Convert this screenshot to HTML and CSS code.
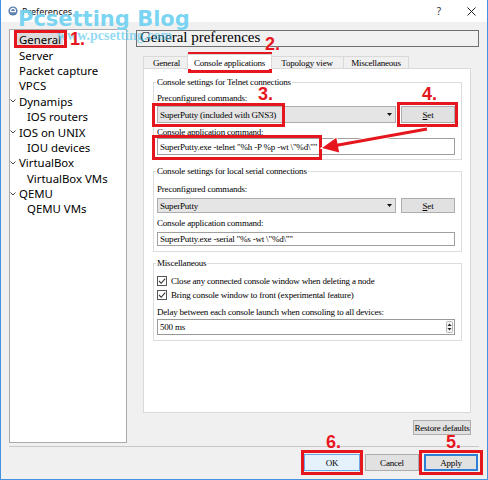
FILE: index.html
```html
<!DOCTYPE html>
<html>
<head>
<meta charset="utf-8">
<title>Preferences</title>
<link rel="stylesheet" href="styles.css">
</head>
<body>
<div class="window">
  <header class="titlebar">
    <svg class="app-icon" viewBox="0 0 10 10">
      <circle cx="5" cy="5" r="4.6" fill="#5d80b0"/>
      <path d="M2.6 5.6 A2.5 2.5 0 1 1 7.4 5.6 H2.6" fill="none" stroke="#fff" stroke-width="1.1"/>
    </svg>
    <span class="title">Preferences</span>
    <span class="help">?</span>
    <svg class="close" viewBox="0 0 9 9"><path d="M0.5 0.5 L8.5 8.5 M8.5 0.5 L0.5 8.5" stroke="#222" stroke-width="1"/></svg>
  </header>

  <div class="body">
    <div class="main">
      <ul class="tree">
        <li class="item"><span class="sel">General</span></li>
        <li class="item">Server</li>
        <li class="item">Packet capture</li>
        <li class="item">VPCS</li>
        <li class="item"><svg class="chev" viewBox="0 0 6 4"><path d="M0.5 0.5 L3 3 L5.5 0.5" fill="none" stroke="#444" stroke-width="1"/></svg>Dynamips</li>
        <li class="item child">IOS routers</li>
        <li class="item"><svg class="chev" viewBox="0 0 6 4"><path d="M0.5 0.5 L3 3 L5.5 0.5" fill="none" stroke="#444" stroke-width="1"/></svg>IOS on UNIX</li>
        <li class="item child">IOU devices</li>
        <li class="item"><svg class="chev" viewBox="0 0 6 4"><path d="M0.5 0.5 L3 3 L5.5 0.5" fill="none" stroke="#444" stroke-width="1"/></svg>VirtualBox</li>
        <li class="item child">VirtualBox VMs</li>
        <li class="item"><svg class="chev" viewBox="0 0 6 4"><path d="M0.5 0.5 L3 3 L5.5 0.5" fill="none" stroke="#444" stroke-width="1"/></svg>QEMU</li>
        <li class="item child">QEMU VMs</li>
      </ul>

      <section class="page">
        <div class="page-title">General preferences</div>
        <div class="tabwidget">
          <div class="tabbar">
            <span class="tab tab-general">General</span>
            <span class="tab tab-console active">Console applications</span>
            <span class="tab tab-topology">Topology view</span>
            <span class="tab tab-misc">Miscellaneous</span>
          </div>
          <div class="pane">
            <fieldset class="group group-telnet">
              <legend>Console settings for Telnet connections</legend>
              <div class="label">Preconfigured commands:</div>
              <div class="row">
                <div class="combo ctl"><span class="combo-text">SuperPutty (included with GNS3)</span><svg class="drop" viewBox="0 0 5 3"><polygon points="0,0 5,0 2.5,3" fill="#111"/></svg></div>
                <button class="btn set ctl"><u>S</u>et</button>
              </div>
              <div class="label">Console application command:</div>
              <div class="field ctl">SuperPutty.exe -telnet "%h -P %p -wt \"%d\""</div>
            </fieldset>

            <fieldset class="group group-serial">
              <legend>Console settings for local serial connections</legend>
              <div class="label">Preconfigured commands:</div>
              <div class="row">
                <div class="combo ctl"><span class="combo-text">SuperPutty</span><svg class="drop" viewBox="0 0 5 3"><polygon points="0,0 5,0 2.5,3" fill="#111"/></svg></div>
                <button class="btn set ctl"><u>S</u>et</button>
              </div>
              <div class="label">Console application command:</div>
              <div class="field ctl">SuperPutty.exe -serial "%s -wt \"%d\""</div>
            </fieldset>

            <fieldset class="group group-misc">
              <legend>Miscellaneous</legend>
              <div class="check check-first"><svg class="box" viewBox="0 0 10 10"><rect x="0.5" y="0.5" width="9" height="9" fill="#fff" stroke="#555"/><path d="M2 5 L4.2 7.3 L8.2 2.6" fill="none" stroke="#333" stroke-width="1.1"/></svg><span>Close any connected console window when deleting a node</span></div>
              <div class="check"><svg class="box" viewBox="0 0 10 10"><rect x="0.5" y="0.5" width="9" height="9" fill="#fff" stroke="#555"/><path d="M2 5 L4.2 7.3 L8.2 2.6" fill="none" stroke="#333" stroke-width="1.1"/></svg><span>Bring console window to front (experimental feature)</span></div>
              <div class="label delay">Delay between each console launch when consoling to all devices:</div>
              <div class="spin"><span class="spin-text">500 ms</span><svg class="spin-arrows" viewBox="0 0 7 12"><rect x="0.5" y="0.5" width="6" height="11" rx="1" fill="#f4f4f4" stroke="#b5b5b5"/><polygon points="1.5,5 5.5,5 3.5,2.5" fill="#222"/><polygon points="1.5,7 5.5,7 3.5,9.5" fill="#222"/></svg></div>
            </fieldset>
          </div>
        </div>
        <div class="restore-row"><button class="btn restore">Restore defaults</button></div>
      </section>
    </div>
    <div class="separator"></div>
    <div class="buttons">
      <button class="btn dlg ok">OK</button>
      <button class="btn dlg cancel">Cancel</button>
      <button class="btn dlg apply">Apply</button>
    </div>
  </div>

  <div class="watermark">Pcsetting Blog</div>
  <div class="watermark-url">www.pcsetting.com</div>

  <div class="mark mark-general"></div>
  <div class="mark mark-tab"></div>
  <div class="mark mark-combo"></div>
  <div class="mark mark-set"></div>
  <div class="mark mark-input"></div>
  <div class="mark mark-ok"></div>
  <div class="mark mark-apply"></div>

  <span class="num num-1">1.</span>
  <span class="num num-2">2.</span>
  <span class="num num-3">3.</span>
  <span class="num num-4">4.</span>
  <span class="num num-5">5.</span>
  <span class="num num-6">6.</span>

  <svg class="arrow" viewBox="0 0 488 480">
    <line x1="427" y1="129" x2="337" y2="145.2" stroke="#fff" stroke-width="5"/>
    <polygon points="322,148 336.3,137.8 339.2,152.4" fill="#fff" stroke="#fff" stroke-width="2"/>
    <line x1="427" y1="129" x2="337" y2="145.2" stroke="#e5161e" stroke-width="3"/>
    <polygon points="322,148 336.3,137.8 339.2,152.4" fill="#e5161e"/>
  </svg>
</div>
</body>
</html>
```

FILE: styles.css
```css
* {
  box-sizing: border-box;
}

html,
body {
  margin: 0;
  padding: 0;
}

body {
  width: 488px;
  height: 480px;
  overflow: hidden;
  background: #f0f0f0;
  font-family: "Liberation Serif", serif;
}

.window {
  position: relative;
  width: 488px;
  height: 480px;
  background: #f0f0f0;
}

.window::after {
  content: "";
  position: absolute;
  inset: 0;
  border: 1px solid #4393df;
  border-top: none;
  pointer-events: none;
}

/* Title bar */
.titlebar {
  height: 22px;
  background: #fff;
  display: flex;
  align-items: center;
  padding-left: 8px;
  font-family: "Noto Sans", sans-serif;
}

.app-icon {
  width: 10px;
  height: 10px;
  margin-right: 4px;
}

.title {
  flex: 1;
  font-size: 9px;
  color: #111;
}

.help {
  font-size: 10px;
  color: #333;
  margin-right: 26px;
}

.close {
  width: 9px;
  height: 9px;
  margin-right: 12px;
}

/* Body */
.body {
  padding: 7px 9px 0 9px;
}

.main {
  display: flex;
  gap: 9px;
  height: 414px;
}

/* Tree */
.tree {
  width: 118px;
  flex: none;
  margin: 0;
  padding: 2px 0 0 0;
  list-style: none;
  background: #fff;
  border: 1px solid #a9a9a9;
  font-family: "Noto Sans", sans-serif;
  font-size: 11.4px;
  color: #000;
}

.item {
  height: 15.4px;
  display: flex;
  align-items: center;
  padding-left: 9px;
  white-space: nowrap;
}

.item.child {
  padding-left: 17px;
}

.chev {
  width: 6px;
  height: 4px;
  margin-left: -9px;
  margin-right: 3px;
}

.sel {
  background: #dcdcdc;
  padding: 0 2px;
  margin-left: -2px;
}

/* Right page */
.page {
  flex: 1;
  display: flex;
  flex-direction: column;
  padding-top: 1px;
  min-width: 0;
}

.page-title {
  height: 17px;
  border: 1px solid #6e6e6e;
  background: #f1f1f1;
  padding-left: 3px;
  font-family: "Liberation Serif", serif;
  font-size: 15px;
  line-height: 13px;
  color: #000;
}

.tabwidget {
  margin: 7px 8px 0 7px;
  display: flex;
  flex-direction: column;
}

.tabbar {
  height: 14px;
  display: flex;
  align-items: flex-end;
}

.tab {
  height: 12px;
  padding-top: 1px;
  border: 1px solid #d9d9d9;
  border-bottom: none;
  border-right-width: 0;
  background: #f0f0f0;
  font-size: 9px;
  line-height: 11px;
  letter-spacing: -0.2px;
  text-align: center;
  white-space: nowrap;
  color: #000;
}

.tab-general {
  width: 46px;
}

.tab-console {
  width: 85px;
}

.tab-topology {
  width: 73px;
}

.tab-misc {
  width: 66px;
  border-right-width: 1px;
}

.tab.active {
  height: 15px;
  padding-top: 3px;
  margin: 0 -2px -1px;
  border-right-width: 1px;
  background: #fff;
  position: relative;
  z-index: 1;
}

.pane {
  height: 345px;
  background: #fff;
  border: 1px solid #d9d9d9;
  padding: 8px 8px 0 9px;
  font-size: 9px;
  line-height: 12px;
  letter-spacing: -0.2px;
  color: #000;
}

/* Group boxes */
.group {
  margin: 0;
  min-width: 0;
  border: 1px solid #dcdcdc;
  padding: 4px 6px 4px 3px;
}

.group legend {
  padding: 0 1px;
  margin-left: -1px;
  font-size: 9px;
  line-height: 11px;
}

.label {
  height: 12px;
  white-space: nowrap;
}

.row {
  display: flex;
  gap: 5px;
}

.combo {
  flex: 1;
  display: flex;
  align-items: center;
  background: #e5e5e5;
  border: 1px solid #adadad;
  padding-left: 2px;
}

.combo-text {
  flex: 1;
  white-space: nowrap;
}

.drop {
  width: 5px;
  height: 3px;
  margin-right: 3px;
}

.field {
  display: flex;
  align-items: center;
  background: #fff;
  border: 1px solid #a0a0a0;
  padding-left: 2px;
  white-space: nowrap;
}

.btn {
  margin: 0;
  padding: 0;
  background: #e1e1e1;
  border: 1px solid #adadad;
  border-radius: 0;
  font-family: "Liberation Serif", serif;
  font-size: 9px;
  letter-spacing: -0.2px;
  color: #000;
  text-align: center;
  white-space: nowrap;
}

.set {
  width: 54px;
}

.group-telnet {
  padding-top: 4px;
}

.group-telnet .row {
  margin: 2px 0 3px;
}

.group-telnet .ctl {
  height: 17px;
}

.group-serial {
  margin-top: 6px;
  padding-top: 6px;
  padding-bottom: 5px;
}

.group-serial .row {
  margin: 3px 0 4px;
}

.group-serial .ctl {
  height: 15px;
}

.group-serial .field {
  height: 14px;
  margin-top: 3px;
}

.group-misc {
  margin-top: 6px;
  padding-top: 0;
  padding-bottom: 5px;
}

.check {
  height: 12px;
  display: flex;
  align-items: center;
  gap: 4px;
  margin-top: 2px;
  white-space: nowrap;
}

.check-first {
  margin-top: 6px;
}

.box {
  width: 10px;
  height: 10px;
  flex: none;
}

.delay {
  margin-top: 5px;
}

.spin {
  height: 16px;
  margin-top: 1px;
  display: flex;
  align-items: center;
  border: 1px solid #999;
  background: #fff;
  padding-left: 2px;
}

.spin-text {
  flex: 1;
}

.spin-arrows {
  width: 7px;
  height: 12px;
  margin-right: 1px;
}

.restore-row {
  display: flex;
  justify-content: flex-end;
  margin-top: 7px;
  padding-right: 8px;
}

.restore {
  width: 58px;
  height: 15px;
}

.separator {
  margin-top: 3px;
  height: 1px;
  background: #c9c9c9;
}

.buttons {
  display: flex;
  justify-content: flex-end;
  gap: 5px;
  margin-top: 7px;
  padding-right: 1px;
}

.dlg {
  height: 17px;
}

.ok {
  width: 56px;
  background: #e5f1fb;
  border-color: #6aa8e6;
}

.cancel {
  width: 54px;
}

.apply {
  width: 54px;
  border: 1px solid #2d7fd5;
  box-shadow: inset 0 0 0 1px #2d7fd5;
}

/* Watermark overlay */
.watermark {
  position: absolute;
  left: 18px;
  top: 9px;
  font-family: "DejaVu Sans", sans-serif;
  font-weight: bold;
  font-size: 21px;
  line-height: 21px;
  color: rgba(72, 196, 236, 0.72);
  text-shadow: 0 0 1px rgba(255, 255, 255, 0.8);
  white-space: nowrap;
  pointer-events: none;
}

.watermark-url {
  position: absolute;
  left: 57px;
  top: 29px;
  font-family: "Liberation Serif", serif;
  font-weight: bold;
  font-size: 14px;
  line-height: 14px;
  color: rgba(72, 196, 236, 0.6);
  white-space: nowrap;
  pointer-events: none;
}

/* Annotation marks */
.mark {
  position: absolute;
  border: 3px solid #e5161e;
  pointer-events: none;
}

.mark-general {
  left: 14px;
  top: 30px;
  width: 53px;
  height: 18px;
}

.mark-tab {
  left: 188px;
  top: 52px;
  width: 84px;
  height: 21px;
}

.mark-combo {
  left: 152px;
  top: 103px;
  width: 133px;
  height: 24px;
}

.mark-set {
  left: 397px;
  top: 102px;
  width: 61px;
  height: 25px;
}

.mark-input {
  left: 152px;
  top: 135px;
  width: 170px;
  height: 25px;
}

.mark-ok {
  left: 301px;
  top: 450px;
  width: 62px;
  height: 25px;
}

.mark-apply {
  left: 419px;
  top: 450px;
  width: 64px;
  height: 25px;
}

.num {
  position: absolute;
  font-family: "Liberation Sans", sans-serif;
  font-weight: bold;
  font-size: 18px;
  line-height: 18px;
  color: #e5161e;
  text-shadow: 0 0 1px #fff;
  pointer-events: none;
}

.num-1 { left: 70px; top: 30px; }
.num-2 { left: 265px; top: 35px; }
.num-3 { left: 258px; top: 85px; }
.num-4 { left: 422px; top: 85px; }
.num-5 { left: 446px; top: 433px; }
.num-6 { left: 326px; top: 433px; }

.arrow {
  position: absolute;
  left: 0;
  top: 0;
  width: 488px;
  height: 480px;
  pointer-events: none;
}
```
